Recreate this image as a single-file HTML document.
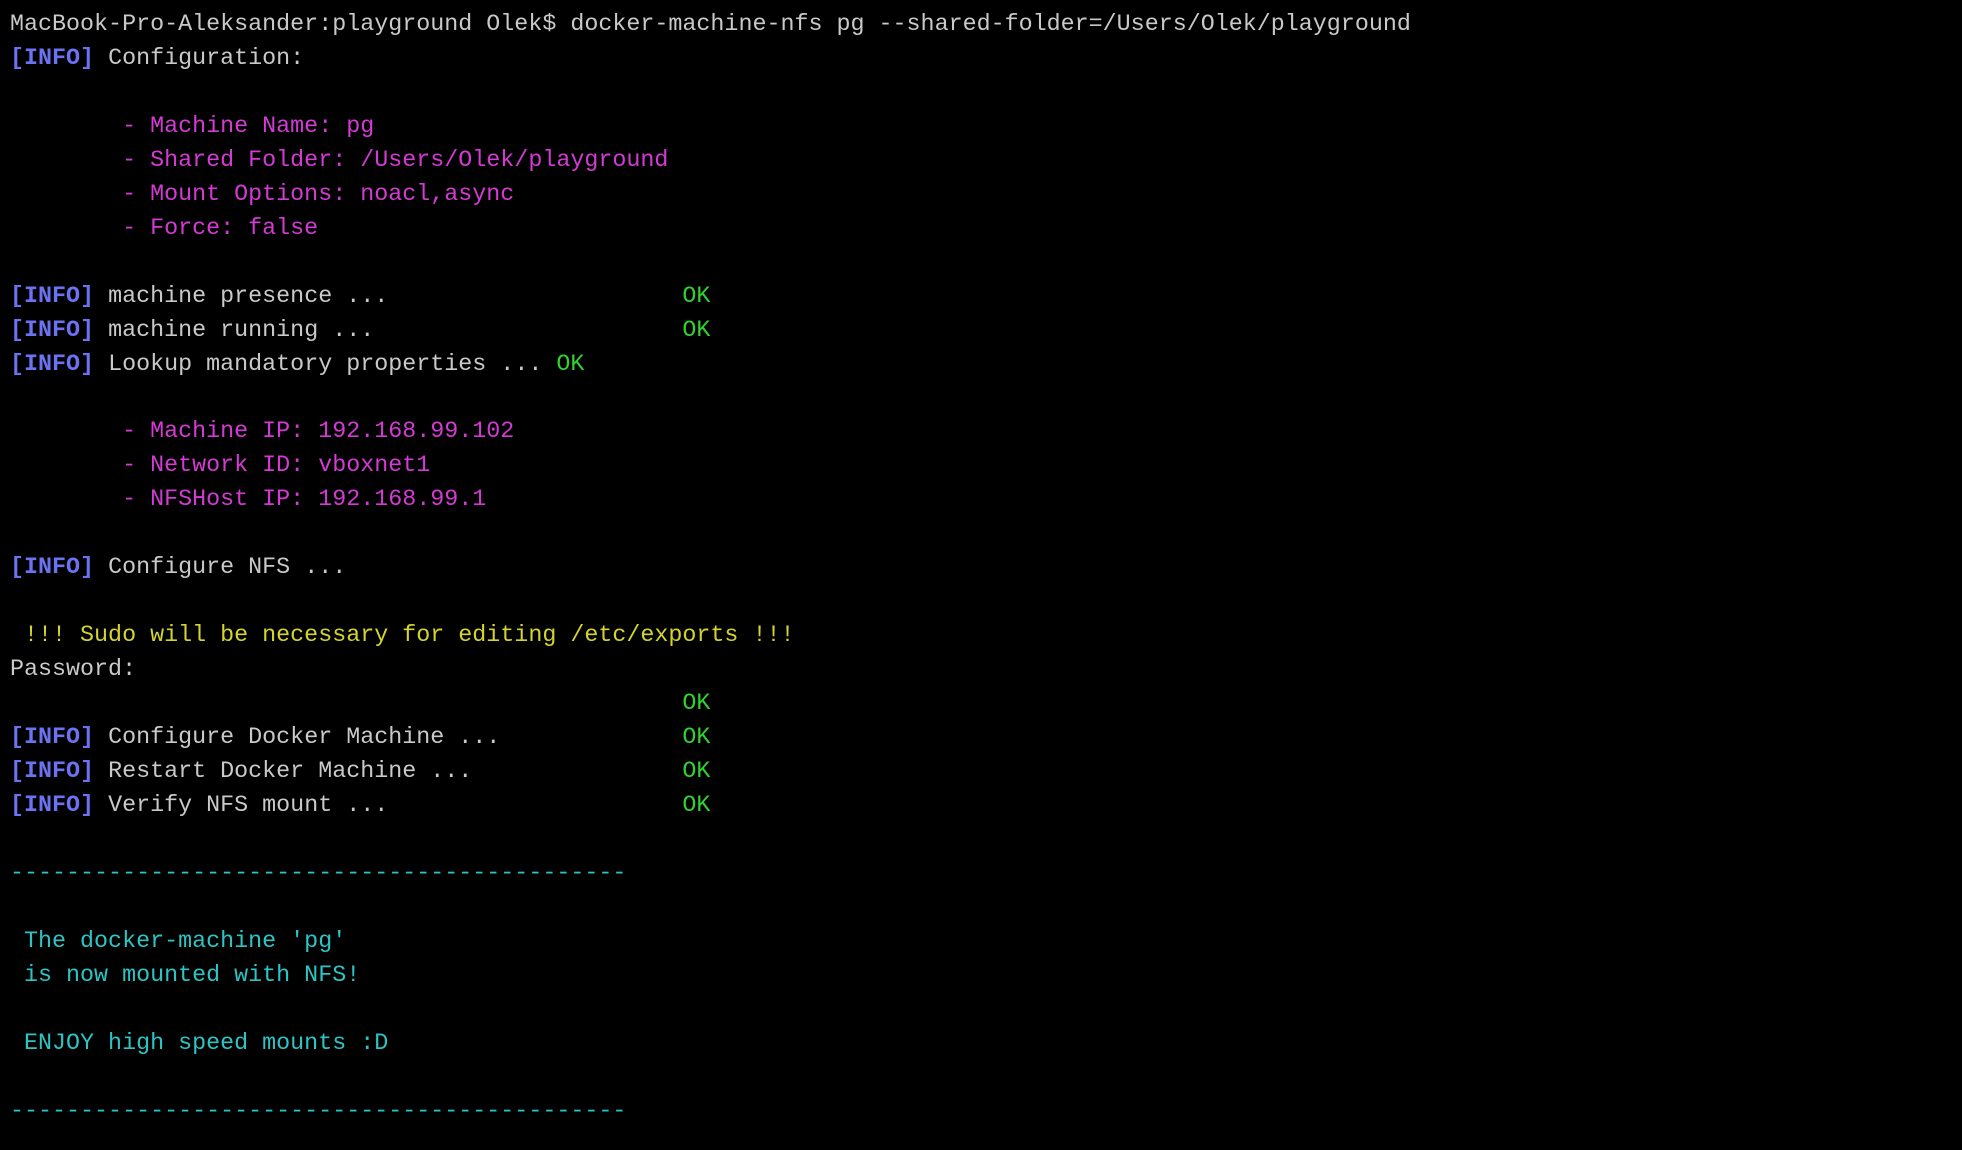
<!DOCTYPE html>
<html><head><meta charset="utf-8"><style>
html,body{margin:0;padding:0;background:#000;width:1962px;height:1150px;overflow:hidden}
pre{margin:0;padding:9px 0 0 10px;font-family:"Liberation Mono",monospace;font-size:23.35px;line-height:33.96px;color:#c9c9c9;white-space:pre}
.b{color:#6c73f2;font-weight:bold}.m{color:#d43ad4}.g{color:#30d130}.y{color:#d4d42c}.c{color:#2cc4c4}
</style></head><body><pre>MacBook-Pro-Aleksander:playground Olek$ docker-machine-nfs pg --shared-folder=/Users/Olek/playground
<span class="b">[INFO]</span> Configuration:

<span class="m">        - Machine Name: pg</span>
<span class="m">        - Shared Folder: /Users/Olek/playground</span>
<span class="m">        - Mount Options: noacl,async</span>
<span class="m">        - Force: false</span>

<span class="b">[INFO]</span> machine presence ...                     <span class="g">OK</span>
<span class="b">[INFO]</span> machine running ...                      <span class="g">OK</span>
<span class="b">[INFO]</span> Lookup mandatory properties ... <span class="g">OK</span>

<span class="m">        - Machine IP: 192.168.99.102</span>
<span class="m">        - Network ID: vboxnet1</span>
<span class="m">        - NFSHost IP: 192.168.99.1</span>

<span class="b">[INFO]</span> Configure NFS ...

<span class="y"> !!! Sudo will be necessary for editing /etc/exports !!!</span>
Password:
                                                <span class="g">OK</span>
<span class="b">[INFO]</span> Configure Docker Machine ...             <span class="g">OK</span>
<span class="b">[INFO]</span> Restart Docker Machine ...               <span class="g">OK</span>
<span class="b">[INFO]</span> Verify NFS mount ...                     <span class="g">OK</span>

<span class="c">--------------------------------------------</span>

<span class="c"> The docker-machine 'pg'</span>
<span class="c"> is now mounted with NFS!</span>

<span class="c"> ENJOY high speed mounts :D</span>

<span class="c">--------------------------------------------</span>
</pre></body></html>
